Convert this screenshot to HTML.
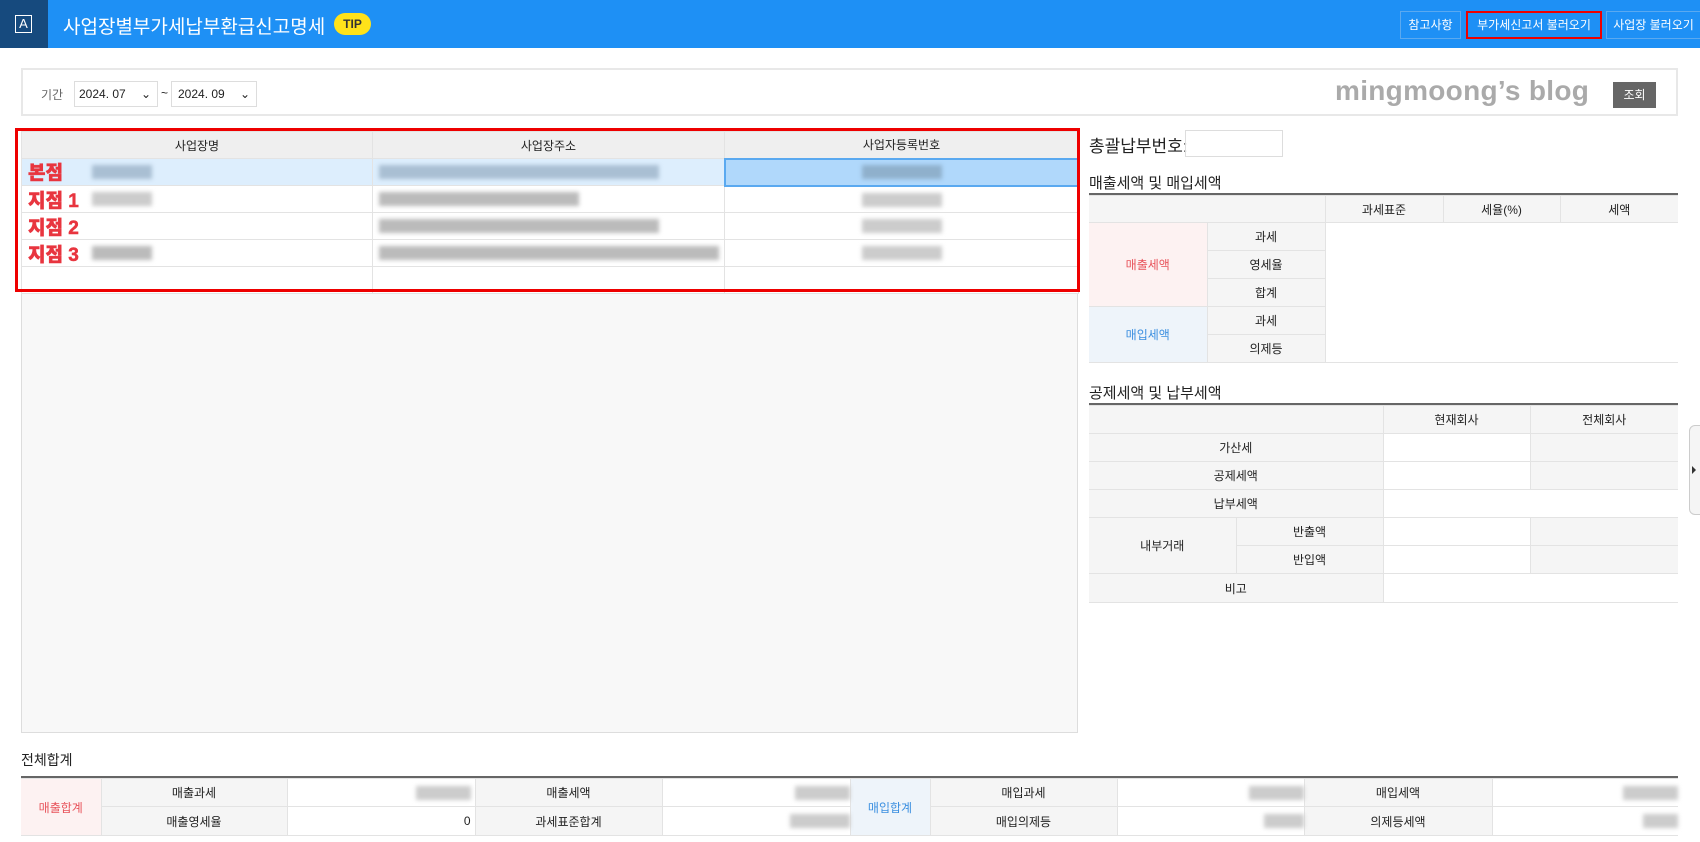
<!DOCTYPE html>
<html><head><meta charset="utf-8"><style>
*{box-sizing:border-box;margin:0;padding:0}
body{width:1700px;height:842px;overflow:hidden;background:#fff;font-family:"Liberation Sans","Noto Sans CJK KR",sans-serif;font-size:12px;color:#222;position:relative}
.a{position:absolute}
.hdr{left:0;top:0;width:1700px;height:48px;background:#1e90f5}
.btn{top:11px;height:28px;border:1px solid #5aa9f0;color:#fff;font-size:12px;line-height:26px;text-align:center}
table{border-collapse:collapse;position:absolute;table-layout:fixed}
td{border:1px solid #e3e3e3;text-align:center;font-size:12px;padding:0}
.g{background:#f5f5f5}
.blur{display:inline-block;height:14px;background:#bbb;filter:blur(2px);vertical-align:middle}
.red{color:#e8353f;font-weight:900;font-size:19px;position:absolute;left:7px;-webkit-text-stroke:0.5px #e8353f}
</style></head><body>
<div class="a hdr"></div>
<div class="a" style="left:0;top:0;width:48px;height:48px;background:#164a7e"></div>
<div class="a" style="left:15px;top:15px;width:17px;height:18px;border:1.5px solid #fff;color:#fff;font-size:13px;line-height:15px;text-align:center">A</div>
<div class="a" style="left:63px;top:12px;color:#fff;font-size:19px">사업장별부가세납부환급신고명세</div>
<div class="a" style="left:334px;top:13px;width:37px;height:22px;border-radius:11px;background:#ffe21a;color:#333;font-weight:bold;font-size:12px;line-height:22px;text-align:center">TIP</div>
<div class="a btn" style="left:1400px;width:61px">참고사항</div>
<div class="a btn" style="left:1466px;width:136px;border:2px solid #e00;line-height:24px">부가세신고서 불러오기</div>
<div class="a btn" style="left:1606px;width:94px;border-right:none">사업장 불러오기</div>

<div class="a" style="left:21px;top:68px;width:1657px;height:48px;border:2px solid #e8e8e8"></div>
<div class="a" style="left:41px;top:86px;color:#666">기간</div>
<div class="a" style="left:74px;top:81px;width:84px;height:26px;border:1px solid #ddd;line-height:24px;padding-left:4px">2024. 07 <span style="margin-left:12px">⌄</span></div>
<div class="a" style="left:161px;top:86px">~</div>
<div class="a" style="left:171px;top:81px;width:86px;height:26px;border:1px solid #ddd;line-height:24px;padding-left:6px">2024. 09 <span style="margin-left:12px">⌄</span></div>
<div class="a" style="left:1335px;top:75px;color:#aaa;font-size:28px;font-weight:bold;letter-spacing:0.3px">mingmoong’s blog</div>
<div class="a" style="left:1613px;top:82px;width:43px;height:26px;background:#666;color:#fff;line-height:26px;text-align:center">조회</div>

<div class="a" style="left:21px;top:131px;width:1057px;height:602px;background:#f8f8f8;border:1px solid #ddd"></div>
<table style="left:21px;top:131px;width:1057px">
<colgroup><col style="width:351px"><col style="width:352px"><col style="width:354px"></colgroup>
<tr style="height:27px;background:#efefef"><td>사업장명</td><td>사업장주소</td><td>사업자등록번호</td></tr>
<tr style="height:27px;background:#ddeefd"><td style="text-align:left;padding-left:70px"><span class="blur" style="width:60px;background:#a9bfd3"></span></td><td style="text-align:left;padding-left:6px"><span class="blur" style="width:280px;background:#a9bfd3"></span></td><td style="background:#b0d8fb;border:2px solid #5aa9f0"><span class="blur" style="width:80px;background:#8fb0cc"></span></td></tr>
<tr style="height:27px;background:#fff"><td style="text-align:left;padding-left:70px"><span class="blur" style="width:60px;background:#ccc"></span></td><td style="text-align:left;padding-left:6px"><span class="blur" style="width:200px"></span></td><td><span class="blur" style="width:80px;background:#ccc"></span></td></tr>
<tr style="height:27px;background:#fff"><td style="text-align:left;padding-left:70px"></td><td style="text-align:left;padding-left:6px"><span class="blur" style="width:280px"></span></td><td><span class="blur" style="width:80px;background:#ccc"></span></td></tr>
<tr style="height:27px;background:#fff"><td style="text-align:left;padding-left:70px"><span class="blur" style="width:60px"></span></td><td style="text-align:left;padding-left:6px"><span class="blur" style="width:340px"></span></td><td><span class="blur" style="width:80px;background:#ccc"></span></td></tr>
<tr style="height:27px;background:#fff"><td></td><td></td><td></td></tr>
</table>
<div class="red" style="left:28px;top:158px">본점</div>
<div class="red" style="left:28px;top:186px">지점 1</div>
<div class="red" style="left:28px;top:213px">지점 2</div>
<div class="red" style="left:28px;top:240px">지점 3</div>
<div class="a" style="left:15px;top:128px;width:1065px;height:164px;border:3px solid #e00"></div>

<div class="a" style="left:1089px;top:132px;font-size:17px">총괄납부번호:</div>
<div class="a" style="left:1185px;top:130px;width:98px;height:27px;border:1px solid #ddd"></div>
<div class="a" style="left:1089px;top:172px;font-size:15px">매출세액 및 매입세액</div>
<div class="a" style="left:1089px;top:193px;width:589px;height:2px;background:#666"></div>
<table style="left:1089px;top:195px;width:589px">
<colgroup><col style="width:118px"><col style="width:118px"><col style="width:118px"><col style="width:117px"><col style="width:118px"></colgroup>
<tr style="height:27px" class="g"><td colspan="2" style="border-left:none"></td><td>과세표준</td><td>세율(%)</td><td style="border-right:none">세액</td></tr>
<tr style="height:28px"><td rowspan="3" style="background:#fdf2f2;color:#e8535b;border-left:none">매출세액</td><td class="g">과세</td><td colspan="3" style="border:none"></td></tr>
<tr style="height:28px"><td class="g">영세율</td><td colspan="3" style="border:none"></td></tr>
<tr style="height:28px"><td class="g">합계</td><td colspan="3" style="border:none"></td></tr>
<tr style="height:28px"><td rowspan="2" style="background:#eef4fa;color:#3b8fe0;border-left:none">매입세액</td><td class="g">과세</td><td colspan="3" style="border:none"></td></tr>
<tr style="height:28px"><td class="g">의제등</td><td colspan="3" style="border:none;border-bottom:1px solid #e3e3e3"></td></tr>
</table>

<div class="a" style="left:1089px;top:382px;font-size:15px">공제세액 및 납부세액</div>
<div class="a" style="left:1089px;top:403px;width:589px;height:2px;background:#666"></div>
<table style="left:1089px;top:405px;width:589px">
<colgroup><col style="width:147px"><col style="width:147px"><col style="width:147px"><col style="width:148px"></colgroup>
<tr style="height:28px" class="g"><td colspan="2" style="border-left:none"></td><td>현재회사</td><td style="border-right:none">전체회사</td></tr>
<tr style="height:28px"><td colspan="2" class="g" style="border-left:none">가산세</td><td></td><td class="g" style="border-right:none"></td></tr>
<tr style="height:28px"><td colspan="2" class="g" style="border-left:none">공제세액</td><td></td><td class="g" style="border-right:none"></td></tr>
<tr style="height:28px"><td colspan="2" class="g" style="border-left:none">납부세액</td><td colspan="2" style="border-right:none"></td></tr>
<tr style="height:28px"><td rowspan="2" class="g" style="border-left:none">내부거래</td><td class="g">반출액</td><td></td><td class="g" style="border-right:none"></td></tr>
<tr style="height:28px"><td class="g">반입액</td><td></td><td class="g" style="border-right:none"></td></tr>
<tr style="height:29px"><td colspan="2" class="g" style="border-left:none">비고</td><td colspan="2" style="border-right:none"></td></tr>
</table>
<div class="a" style="left:1689px;top:425px;width:14px;height:90px;border:1px solid #ccc;border-radius:6px 0 0 6px;background:#f5f5f5"></div>
<div class="a" style="left:1692px;top:466px;width:0;height:0;border-left:4px solid #333;border-top:4px solid transparent;border-bottom:4px solid transparent"></div>

<div class="a" style="left:21px;top:750px;font-size:14px">전체합계</div>
<div class="a" style="left:21px;top:776px;width:1657px;height:2px;background:#666"></div>
<table style="left:21px;top:778px;width:1657px">
<colgroup><col style="width:80px"><col style="width:186px"><col style="width:188px"><col style="width:187px"><col style="width:188px"><col style="width:80px"><col style="width:187px"><col style="width:187px"><col style="width:188px"><col style="width:186px"></colgroup>
<tr style="height:28px"><td rowspan="2" style="background:#fdf2f2;color:#e8535b;border-left:none">매출합계</td><td class="g">매출과세</td><td style="text-align:right;padding-right:4px"><span class="blur" style="width:55px;background:#ccc"></span></td><td class="g">매출세액</td><td style="text-align:right"><span class="blur" style="width:55px;background:#ccc"></span></td><td rowspan="2" style="background:#eef4fa;color:#3b8fe0">매입합계</td><td class="g">매입과세</td><td style="text-align:right"><span class="blur" style="width:55px;background:#ccc"></span></td><td class="g">매입세액</td><td style="text-align:right;border-right:none"><span class="blur" style="width:55px;background:#ccc"></span></td></tr>
<tr style="height:29px"><td class="g">매출영세율</td><td style="text-align:right;padding-right:4px">0</td><td class="g">과세표준합계</td><td style="text-align:right"><span class="blur" style="width:60px;background:#ccc"></span></td><td class="g">매입의제등</td><td style="text-align:right"><span class="blur" style="width:40px;background:#ccc"></span></td><td class="g">의제등세액</td><td style="text-align:right;border-right:none"><span class="blur" style="width:35px;background:#ccc"></span></td></tr>
</table>
</body></html>
